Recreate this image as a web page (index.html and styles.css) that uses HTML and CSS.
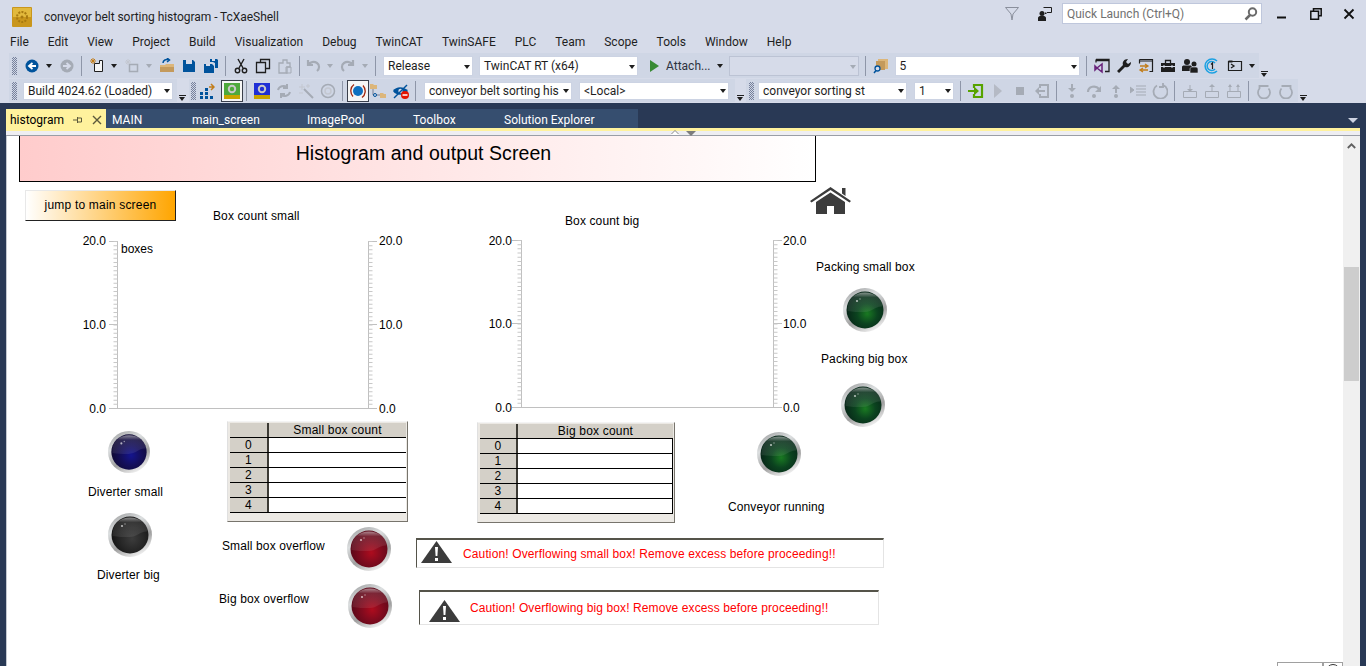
FILE: index.html
```html
<!DOCTYPE html>
<html lang="en">
<head>
  <meta charset="UTF-8">
  <title>conveyor belt sorting histogram - TcXaeShell</title>
  <link rel="stylesheet" href="styles.css">
</head>
<body>

  <!-- shared lamp drawings -->
  <svg class="sprites" width="0" height="0" aria-hidden="true">
    <defs>
      <linearGradient id="ring" x1="0.1" y1="0" x2="0.6" y2="1">
        <stop offset="0" stop-color="#9a9b9c"/>
        <stop offset="0.35" stop-color="#dcdfe0"/>
        <stop offset="0.7" stop-color="#a0a0a0"/>
        <stop offset="1" stop-color="#ececec"/>
      </linearGradient>
      <linearGradient id="shine" x1="0" y1="0" x2="0" y2="1">
        <stop offset="0" stop-color="#fff" stop-opacity=".5"/>
        <stop offset="0.25" stop-color="#fff" stop-opacity=".12"/>
        <stop offset="1" stop-color="#fff" stop-opacity=".08"/>
      </linearGradient>
      <radialGradient id="face-green" cx="0.56" cy="0.6" r="0.55">
        <stop offset="0" stop-color="#1a7a22"/>
        <stop offset="0.5" stop-color="#0b431f"/>
        <stop offset="1" stop-color="#072618"/>
      </radialGradient>
      <radialGradient id="face-blue" cx="0.56" cy="0.6" r="0.55">
        <stop offset="0" stop-color="#14148e"/>
        <stop offset="0.5" stop-color="#140f5c"/>
        <stop offset="1" stop-color="#100a35"/>
      </radialGradient>
      <radialGradient id="face-black" cx="0.56" cy="0.6" r="0.55">
        <stop offset="0" stop-color="#3c3c3c"/>
        <stop offset="0.6" stop-color="#262626"/>
        <stop offset="1" stop-color="#141414"/>
      </radialGradient>
      <radialGradient id="face-red" cx="0.56" cy="0.6" r="0.55">
        <stop offset="0" stop-color="#ae0c1e"/>
        <stop offset="0.5" stop-color="#820b1e"/>
        <stop offset="1" stop-color="#5c0819"/>
      </radialGradient>
      <g id="lamp-shine">
        <path d="M4.500 23C4 11 12 4.500 22 4.500s18 6.500 17.500 14c-7-1-10 5.500-18 5.500-7 0-11 0-17-1z" fill="url(#shine)"/>
        <circle cx="14" cy="13" r="1.100" fill="#fff" opacity=".65"/>
        <circle cx="17" cy="11" r=".7" fill="#fff" opacity=".55"/>
      </g>
      <symbol id="lamp-green" viewBox="0 0 44 44">
        <circle cx="22" cy="22" r="22" fill="url(#ring)"/>
        <circle cx="22" cy="22" r="18.500" fill="url(#face-green)"/>
        <use href="#lamp-shine"/>
      </symbol>
      <symbol id="lamp-blue" viewBox="0 0 44 44">
        <circle cx="22" cy="22" r="22" fill="url(#ring)"/>
        <circle cx="22" cy="22" r="18.500" fill="url(#face-blue)"/>
        <use href="#lamp-shine"/>
      </symbol>
      <symbol id="lamp-black" viewBox="0 0 44 44">
        <circle cx="22" cy="22" r="22" fill="url(#ring)"/>
        <circle cx="22" cy="22" r="18.500" fill="url(#face-black)"/>
        <use href="#lamp-shine"/>
      </symbol>
      <symbol id="lamp-red" viewBox="0 0 44 44">
        <circle cx="22" cy="22" r="22" fill="url(#ring)"/>
        <circle cx="22" cy="22" r="18.500" fill="url(#face-red)"/>
        <use href="#lamp-shine"/>
      </symbol>
      <symbol id="warn" viewBox="0 0 31 22">
        <path d="M15.500 0 31 22H0z" fill="#3c3c3c"/>
        <path d="M14 6h3l-.6 9h-1.800zM14 17h3v3h-3z" fill="#fff"/>
      </symbol>
    </defs>
  </svg>

  <!-- title bar -->
  <div class="title-bar">
    <svg class="app-logo" viewBox="0 0 20 20">
      <rect width="20" height="20" rx="1" fill="#c9961c"/>
      <rect x="1" y="1" width="18" height="9" fill="#e2b93c"/>
      <circle cx="10" cy="10" r="5" fill="none" stroke="#a87a10" stroke-width="2" stroke-dasharray="2 1.200"/>
      <circle cx="10" cy="10" r="1.500" fill="#a87a10"/>
    </svg>
    <span class="app-title">conveyor belt sorting histogram - TcXaeShell</span>
    <svg class="title-icon filter-icon" viewBox="0 0 14 14">
      <path d="M.5 .5h13L8 7l-1 6L6 7z" fill="none" stroke="#8a8f9c"/>
    </svg>
    <svg class="title-icon feedback-icon" viewBox="0 0 14 14">
      <circle cx="4" cy="6.500" r="2.500" fill="#1e1e1e"/>
      <path d="M0 14v-3c0-1 1-2 2-2h4c1 0 2 1 2 2v3z" fill="#1e1e1e"/>
      <path d="M5.500 .5h8v5H9L7.500 7V5.500" fill="none" stroke="#1e1e1e"/>
    </svg>
    <div class="quick-launch">
      <span>Quick Launch (Ctrl+Q)</span>
      <svg viewBox="0 0 14 14" width="14" height="14">
        <circle cx="8.500" cy="5" r="3.700" fill="none" stroke="#6a6a6a" stroke-width="2"/>
        <path d="M6 8 1.500 12.500" stroke="#6a6a6a" stroke-width="2.500"/>
      </svg>
    </div>
    <div class="win-buttons">
      <svg viewBox="0 0 12 12" width="12" height="12"><path d="M1 9.500h9" stroke="#111" stroke-width="2"/></svg>
      <svg viewBox="0 0 12 12" width="12" height="12"><path d="M3.500 2.500V.8h7.700v6.900H9M.8 3.300h7.700v7.900H.8z" fill="none" stroke="#111" stroke-width="1.500"/></svg>
      <svg viewBox="0 0 12 12" width="12" height="12"><path d="m1.500 1.500 9 9m0-9-9 9" stroke="#111" stroke-width="1.800"/></svg>
    </div>
  </div>

  <!-- menu -->
  <nav class="menu-bar">
    <span>File</span><span>Edit</span><span>View</span><span>Project</span><span>Build</span>
    <span>Visualization</span><span>Debug</span><span>TwinCAT</span><span>TwinSAFE</span><span>PLC</span>
    <span>Team</span><span>Scope</span><span>Tools</span><span>Window</span><span>Help</span>
  </nav>

  <!-- toolbar row 1 -->
  <div class="toolbar-row row-one">
    <div class="strip strip-a">
      <i class="grip"></i>
      <span class="tool"><svg viewBox="0 0 16 16"><circle cx="8" cy="8" r="6.500" fill="#00539c"/><path d="M12 8H6m2.500-3L5 8l3.500 3" fill="none" stroke="#fff" stroke-width="1.800"/></svg></span>
      <i class="drop"></i>
      <span class="tool"><svg viewBox="0 0 16 16"><circle cx="8" cy="8" r="6.500" fill="#a5abb5"/><path d="M4 8h6M7.500 5 11 8l-3.500 3" fill="none" stroke="#d6dbe9" stroke-width="1.800"/></svg></span>
      <i class="sep"></i>
      <span class="tool"><svg viewBox="0 0 16 16"><path d="M5.500 5.500h5v-3h3v11h-8z" fill="#f5f5f5" stroke="#1e1e1e"/><path d="M4 0v6M1 3h6M2 1l4 4m0-4L2 5" stroke="#c27d1a"/></svg></span>
      <i class="drop"></i>
      <span class="tool"><svg viewBox="0 0 16 16"><path d="M5.500 6.500h8v7h-8z" fill="none" stroke="#a5abb5" stroke-width="1.500"/><path d="M4 1v6M1 4h6M2 2l4 4m0-4L2 6" stroke="#c3c7d0"/></svg></span>
      <i class="drop drop-off"></i>
      <span class="tool"><svg viewBox="0 0 16 16"><path d="M1 7h5l1-1h8v8H1z" fill="#dcb67a"/><path d="M1 14h14v-5H1z" fill="#c49a5c"/><path d="M4 5c0-3 3-4 6-3M8 0l2.500 2L8 4" fill="none" stroke="#00539c" stroke-width="1.500"/></svg></span>
      <span class="tool"><svg viewBox="0 0 16 16"><path d="M2 2h10l2 2v10H2z" fill="#00539c"/><path d="M5 2h6v4H5z" fill="#d6dbe9"/></svg></span>
      <span class="tool"><svg viewBox="0 0 16 16"><path d="M1 6h8l2 2v7H1z" fill="#00539c"/><path d="M3 6h4v2H3z" fill="#d6dbe9"/><path d="M7 1h7l1 1v8h-3V5L10 4H7z" fill="#00539c"/><path d="M9 1h3v2H9z" fill="#d6dbe9"/></svg></span>
      <i class="sep"></i>
      <span class="tool"><svg viewBox="0 0 16 16"><path d="M5 1l5 9m1-9-5 9" stroke="#1e1e1e" stroke-width="1.400"/><circle cx="4.500" cy="12.500" r="2.200" fill="none" stroke="#1e1e1e" stroke-width="1.400"/><circle cx="11.500" cy="12.500" r="2.200" fill="none" stroke="#1e1e1e" stroke-width="1.400"/></svg></span>
      <span class="tool"><svg viewBox="0 0 16 16"><path d="M5.500 4V1.500h9v9H11M1.500 4.500h9v10h-9z" fill="none" stroke="#1e1e1e" stroke-width="1.300"/></svg></span>
      <span class="tool"><svg viewBox="0 0 16 16"><path d="M2 5h4V2h4v3h3v4h-3v6H2z" fill="none" stroke="#a5abb5" stroke-width="1.300"/><path d="M9 9h5v6H9z" fill="none" stroke="#a5abb5"/></svg></span>
      <i class="sep"></i>
      <span class="tool tool-tight"><svg viewBox="0 0 16 16"><path d="M3 2v5h5M3.500 6.500C5 4 9 3 12 5s2.500 6 0 8" fill="none" stroke="#a5abb5" stroke-width="2.200"/></svg></span>
      <i class="drop drop-off"></i>
      <span class="tool"><svg viewBox="0 0 16 16"><path d="M13 2v5H8m4.500-.5C11 4 7 3 4 5s-2.500 6 0 8" fill="none" stroke="#a5abb5" stroke-width="2.200"/></svg></span>
      <i class="drop drop-off"></i>
      <i class="sep"></i>
      <div class="combo combo-release">Release</div>
      <div class="combo combo-platform">TwinCAT RT (x64)</div>
      <svg class="play-icon" viewBox="0 0 9 12"><path d="M0 0l9 6-9 6z" fill="#388a34"/></svg>
      <span class="attach-text">Attach...</span>
      <i class="drop drop-attach"></i>
      <div class="combo combo-off"></div>
      <i class="sep sep-find"></i>
      <span class="tool"><svg viewBox="0 0 16 16"><path d="M5 1h10v10H5z" fill="#dcb67a"/><path d="M3 3h9v9H3z" fill="#c49a5c"/><circle cx="4.500" cy="10.500" r="2.500" fill="#d6dbe9" stroke="#00539c" stroke-width="1.300"/><path d="M3 12.500 1 15" stroke="#00539c" stroke-width="1.500"/></svg></span>
      <div class="combo combo-find">5</div>
      <i class="sep"></i>
      <span class="tool"><svg viewBox="0 0 16 16"><path d="M2 1.500h13v12h-4M2 1.500v3M2 2.500h13" fill="none" stroke="#1e1e1e" stroke-width="1.300"/><path d="M1 8l2 2-2 2zM3 10l5-4v8z" fill="none" stroke="#68217a" stroke-width="1.500"/></svg></span>
      <span class="tool"><svg viewBox="0 0 16 16"><path d="M1 13l6-6c-1-3 1-6 5-6l-2 3 2 2 3-2c0 4-3 6-6 5l-6 6z" fill="#1e1e1e"/></svg></span>
      <span class="tool"><svg viewBox="0 0 16 16"><path d="M1.500 1.500h13v12h-3M1.500 1.500v4M1.500 3h13" fill="none" stroke="#1e1e1e" stroke-width="1.200"/><path d="M2 8h8M7 6l3 2-3 2M10 12H3M5 10l-3 2 3 2" fill="none" stroke="#c27d1a" stroke-width="1.300"/></svg></span>
      <span class="tool"><svg viewBox="0 0 16 16"><path d="M1 5h14v9H1z" fill="#1e1e1e"/><path d="M5.500 5V2.500h5V5" fill="none" stroke="#1e1e1e" stroke-width="1.300"/><path d="M1 8.500h14" stroke="#d6dbe9"/><path d="M3 7.500h2v2H3zm8 0h2v2h-2z" fill="#d6dbe9"/></svg></span>
      <span class="tool"><svg viewBox="0 0 16 16"><circle cx="5" cy="4" r="3" fill="#1e1e1e"/><path d="M0 13V9c0-1 1-1.500 2-1.500h6c1 0 2 .5 2 1.500v4z" fill="#1e1e1e"/><circle cx="12" cy="6" r="2.500" fill="#1e1e1e"/><path d="M8 15v-4c0-1 1-2 2-2h4c1 0 2 1 2 2v4z" fill="#1e1e1e" stroke="#d6dbe9" stroke-width=".6"/></svg></span>
      <span class="tool"><svg viewBox="0 0 16 16"><path d="M13 3a7 7 0 1 0 0 10M11 5a4.500 4.500 0 1 0 0 6" fill="none" stroke="#1ba1e2" stroke-width="1.500"/><path d="M7 6.500 8.500 5v6" fill="none" stroke="#1e1e1e" stroke-width="1.200"/></svg></span>
      <span class="tool tool-shift"><svg viewBox="0 0 16 16"><path d="M1.500 3.500h13v9h-13z" fill="none" stroke="#1e1e1e" stroke-width="1.200"/><path d="M1.500 3.500h4" stroke="#1e1e1e" stroke-width="2"/><path d="M4 6l3 2-3 2" fill="none" stroke="#1e1e1e" stroke-width="1.300"/></svg></span>
      <i class="drop"></i>
    </div>
    <i class="overflow"></i>
  </div>

  <!-- toolbar row 2 -->
  <div class="toolbar-row row-two">
    <div class="strip strip-b">
      <i class="grip"></i>
      <div class="combo combo-build">Build 4024.62 (Loaded)</div>
    </div>
    <i class="overflow overflow-b"></i>
    <div class="strip strip-c">
      <i class="grip"></i>
      <span class="tool"><svg viewBox="0 0 16 16"><path d="M1 9h3v3H1zm5 0h3v3H6zm-5 4h3v3H1zm5 0h3v3H6zm5 0h3v3h-3zM6 5h3v3H6z" fill="#00539c"/><path d="M10 4h4m-2-3 3 3-3 3" fill="none" stroke="#c27d1a" stroke-width="1.500"/></svg></span>
      <span class="tool tool-on tool-first"><svg viewBox="0 0 16 16"><path d="M0 0h16v12H0z" fill="#4ea93c"/><path d="M0 12h16v4H0z" fill="#c9a400"/><circle cx="8" cy="6" r="3.200" fill="none" stroke="#c8c8c8" stroke-width="2"/></svg></span>
      <i class="sep"></i>
      <span class="tool"><svg viewBox="0 0 16 16"><path d="M0 0h16v12H0z" fill="#1f2fd6"/><path d="M0 12h16v4H0z" fill="#c9a400"/><circle cx="8" cy="6" r="3.200" fill="none" stroke="#c8c8c8" stroke-width="2"/></svg></span>
      <span class="tool"><svg viewBox="0 0 16 16"><path d="M2 7c1-4 6-5 9-3M14 9c-1 4-6 5-9 3M11 1v4H7M5 15v-4h4" fill="none" stroke="#a5abb5" stroke-width="2"/></svg></span>
      <span class="tool"><svg viewBox="0 0 16 16"><path d="M6 6l9 9" stroke="#a5abb5" stroke-width="2"/><path d="M4 1v6M1 4h6M10 1v4M8 3h4M1 10h4" stroke="#c3c7d0"/></svg></span>
      <span class="tool"><svg viewBox="0 0 16 16"><circle cx="8" cy="8" r="6.500" fill="none" stroke="#a5abb5" stroke-width="1.500"/><circle cx="8" cy="8" r="3" fill="none" stroke="#c3c7d0" stroke-width="1.500"/></svg></span>
      <i class="sep"></i>
      <span class="tool tool-on"><svg viewBox="0 0 16 16"><circle cx="8" cy="8" r="5" fill="#0e70c0"/><path d="M4 1.500C.5 4-.5 9.500 3 13.500m9 1c3.500-2.500 4.500-8 1-12" fill="none" stroke="#a1260d" stroke-width="1.300"/></svg></span>
      <span class="tool tool-narrow"><svg viewBox="0 0 16 16"><path d="M0 1h3l1 1h3v4H0zM10 10h3l1 1h2v4h-6z" fill="#dcb67a"/><path d="M3 6v6h7" fill="none" stroke="#7a8296"/><circle cx="5" cy="12" r="1.500" fill="#d6dbe9" stroke="#00539c"/></svg></span>
      <span class="tool tool-eye"><svg viewBox="0 0 16 16"><path d="M0 8c3-5 11-5 15 0-4 5-12 5-15 0z" fill="#00539c"/><circle cx="7.500" cy="8" r="2.200" fill="#d6dbe9"/><path d="M1 15 14 2" stroke="#00539c" stroke-width="1.500"/><circle cx="12" cy="12" r="4" fill="#e51400"/><path d="M9.500 12h5" stroke="#fff" stroke-width="1.500"/></svg></span>
      <i class="sep"></i>
      <div class="combo combo-file">conveyor belt sorting his</div>
      <div class="combo combo-local">&lt;Local&gt;</div>
    </div>
    <i class="overflow"></i>
    <div class="strip strip-d">
      <i class="grip"></i>
      <div class="combo combo-st">conveyor sorting st</div>
      <div class="combo combo-one">1</div>
      <i class="sep"></i>
      <span class="tool"><svg viewBox="0 0 16 16"><path d="M6 5V2h8v12H6v-3" fill="none" stroke="#57a300" stroke-width="2.200"/><path d="M0 7h6V3.500L11 8l-5 4.500V9H0z" fill="#57a300"/></svg></span>
      <span class="tool"><svg viewBox="0 0 16 16"><path d="M4 1l8 7-8 7z" fill="#b5bac5"/></svg></span>
      <span class="tool"><svg viewBox="0 0 16 16"><path d="M4 4h8v8H4z" fill="#a5abb5"/></svg></span>
      <span class="tool"><svg viewBox="0 0 16 16"><path d="M6 5V2h8v12H6v-3" fill="none" stroke="#a5abb5" stroke-width="2"/><path d="M11 7v2H5v3L1 8l4-4v3z" fill="#a5abb5"/></svg></span>
      <i class="sep"></i>
      <span class="tool"><svg viewBox="0 0 16 16"><path d="M7 1h2v4h3l-4 4-4-4h3z" fill="#a5abb5"/><circle cx="8" cy="13" r="2" fill="#a5abb5"/></svg></span>
      <span class="tool"><svg viewBox="0 0 16 16"><path d="M2 9c0-6 8-7 11-3" fill="none" stroke="#a5abb5" stroke-width="2.200"/><path d="M15 3v6H9z" fill="#a5abb5"/><circle cx="8" cy="13" r="2" fill="#a5abb5"/></svg></span>
      <span class="tool"><svg viewBox="0 0 16 16"><path d="M7 10h2V6h3L8 2 4 6h3z" fill="#a5abb5"/><circle cx="8" cy="13" r="2" fill="#a5abb5"/></svg></span>
      <span class="tool"><svg viewBox="0 0 16 16"><path d="M0 4l4 3-4 3zM6 3h10M6 6h10M6 9h10M6 12h10" fill="#a5abb5" stroke="#a5abb5"/></svg></span>
      <span class="tool"><svg viewBox="0 0 16 16"><path d="M5 2.500a7 7 0 1 0 6-.5M11 0v4H7" fill="none" stroke="#a5abb5" stroke-width="1.800"/></svg></span>
      <i class="sep"></i>
      <span class="tool"><svg viewBox="0 0 16 16"><path d="M1.500 8.500h13v6h-13zM8 2v7" fill="none" stroke="#a5abb5"/><path d="M5 6l3 3 3-3z" fill="#a5abb5"/></svg></span>
      <span class="tool"><svg viewBox="0 0 16 16"><path d="M1.500 8.500h13v6h-13zM8 3v6" fill="none" stroke="#a5abb5"/><path d="M5 4l3-3 3 3z" fill="#a5abb5"/></svg></span>
      <span class="tool"><svg viewBox="0 0 16 16"><path d="M1.500 8.500h13v6h-13zM4 2v6m8-6v6" fill="none" stroke="#a5abb5"/><path d="M2 4l2-3 2 3zm8 0 2-3 2 3z" fill="#a5abb5"/></svg></span>
      <i class="sep"></i>
      <span class="tool"><svg viewBox="0 0 16 16"><path d="M12.500 5.500a6 6 0 1 1-9 0V2M3.500 3h9" fill="none" stroke="#a5abb5" stroke-width="1.800"/></svg></span>
      <span class="tool"><svg viewBox="0 0 16 16"><path d="M3.500 5.500a6 6 0 1 0 9 0V2M12.500 3h-9" fill="none" stroke="#a5abb5" stroke-width="1.800"/></svg></span>
    </div>
    <i class="overflow overflow-b"></i>
  </div>

  <!-- document tabs -->
  <div class="tab-well">
    <div class="tab-active">
      <span>histogram</span>
      <svg viewBox="0 0 10 10" width="10" height="10"><path d="M4.500 2v6M4.500 3h4v4h-4M0 5h4.500" fill="none" stroke="#5c5a3c"/></svg>
      <svg viewBox="0 0 10 10" width="10" height="10"><path d="m1 1 8 8m0-8-8 8" stroke="#5c5a3c" stroke-width="1.400"/></svg>
    </div>
    <div class="tab-strip">
      <span class="tab-main">MAIN</span>
      <span class="tab-screen">main_screen</span>
      <span class="tab-pool">ImagePool</span>
      <span class="tab-box">Toolbox</span>
      <span>Solution Explorer</span>
    </div>
    <i class="tab-menu"></i>
  </div>

  <div class="doc-frame">
    <div class="doc-head">
      <i class="split-up"></i>
      <i class="split-down"></i>
    </div>
    <div class="doc-body">
      <!-- HMI canvas: items sit at their drawn place -->
      <main class="canvas">
        <h1 class="banner">Histogram and output Screen</h1>
        <div class="jump-btn">jump to main screen</div>

        <svg class="home-icon" viewBox="0 0 41 28">
          <path d="M0 15 20.500 1 41 15l-1.500 1.500L20.500 4 1.500 16.500zM32 2h3.500v8L32 7.500z" fill="#3c3c3c"/>
          <path d="M6 16 20.500 6.500 35 16v12H24v-8h-7v8H6z" fill="#3c3c3c"/>
        </svg>

        <span class="lbl lbl-count-small">Box count small</span>
        <span class="lbl lbl-count-big">Box count big</span>

        <svg class="chart chart-small" viewBox="77 230 330 190">
          <path class="axis" d="M117.500 241v168M109 241.500h9M109 324.500h9M109 408.500h260M368.500 241v168M368 241.500h9M368 324.500h9M368 408.500h9"/>
          <path class="minor" d="M115.500 241v167M370.500 241v167"/>
          <text x="106" y="245" text-anchor="end">20.0</text>
          <text x="106" y="329" text-anchor="end">10.0</text>
          <text x="106" y="413" text-anchor="end">0.0</text>
          <text x="379" y="245">20.0</text>
          <text x="379" y="329">10.0</text>
          <text x="379" y="413">0.0</text>
          <text x="121" y="253">boxes</text>
        </svg>

        <svg class="chart chart-big" viewBox="477 230 340 190">
          <path class="axis" d="M521.500 240v168M512 240.500h10M512 323.500h10M512 407.500h261M773.500 240v168M773 240.500h9M773 323.500h9M773 407.500h9"/>
          <path class="minor" d="M519.500 240v167M775.500 240v167"/>
          <text x="512" y="245" text-anchor="end">20.0</text>
          <text x="512" y="328" text-anchor="end">10.0</text>
          <text x="512" y="412" text-anchor="end">0.0</text>
          <text x="783" y="245">20.0</text>
          <text x="783" y="328">10.0</text>
          <text x="783" y="412">0.0</text>
        </svg>

        <div class="grid-table table-small">
          <div class="grid-head"><span></span><span>Small box count</span></div>
          <div class="grid-row"><span>0</span><span></span></div>
          <div class="grid-row"><span>1</span><span></span></div>
          <div class="grid-row"><span>2</span><span></span></div>
          <div class="grid-row"><span>3</span><span></span></div>
          <div class="grid-row"><span>4</span><span></span></div>
        </div>

        <div class="grid-table table-big">
          <div class="grid-head"><span></span><span>Big box count</span></div>
          <div class="grid-row"><span>0</span><span></span></div>
          <div class="grid-row"><span>1</span><span></span></div>
          <div class="grid-row"><span>2</span><span></span></div>
          <div class="grid-row"><span>3</span><span></span></div>
          <div class="grid-row"><span>4</span><span></span></div>
        </div>

        <svg class="lamp lamp-diverter-small"><use href="#lamp-blue"/></svg>
        <span class="lbl lbl-diverter-small">Diverter small</span>
        <svg class="lamp lamp-diverter-big"><use href="#lamp-black"/></svg>
        <span class="lbl lbl-diverter-big">Diverter big</span>

        <span class="lbl lbl-over-small">Small box overflow</span>
        <svg class="lamp lamp-over-small"><use href="#lamp-red"/></svg>
        <span class="lbl lbl-over-big">Big box overflow</span>
        <svg class="lamp lamp-over-big"><use href="#lamp-red"/></svg>

        <svg class="lamp lamp-conveyor"><use href="#lamp-green"/></svg>
        <span class="lbl lbl-conveyor">Conveyor running</span>

        <span class="lbl lbl-pack-small">Packing small box</span>
        <svg class="lamp lamp-pack-small"><use href="#lamp-green"/></svg>
        <span class="lbl lbl-pack-big">Packing big box</span>
        <svg class="lamp lamp-pack-big"><use href="#lamp-green"/></svg>

        <div class="alert alert-small">
          <svg class="alert-icon"><use href="#warn"/></svg>
          <span>Caution! Overflowing small box! Remove excess before proceeding!!</span>
        </div>
        <div class="alert alert-big">
          <svg class="alert-icon"><use href="#warn"/></svg>
          <span>Caution! Overflowing big box! Remove excess before proceeding!!</span>
        </div>

        <div class="corner-box"></div>
        <div class="corner-btn"></div>
      </main>
      <div class="scrollbar">
        <svg viewBox="0 0 9 6" width="9" height="6"><path d="M.8 5 4.500 1.300 8.200 5" fill="none" stroke="#606060" stroke-width="1.800"/></svg>
        <div class="scroll-thumb"></div>
      </div>
    </div>
  </div>

</body>
</html>
```

FILE: styles.css
```css
body {
  margin: 0;
  height: 666px;
  overflow: hidden;
  display: flex;
  flex-direction: column;
  background-color: #d6dbe9;
  color: #1e1e1e;
  font-family: Roboto, "Liberation Sans", sans-serif;
  font-size: 12px;
}

.sprites {
  position: absolute;
}

/* title bar */
.title-bar {
  height: 30px;
  display: flex;
  align-items: flex-start;
  flex-shrink: 0;
}

.app-logo {
  width: 20px;
  height: 20px;
  margin: 7px 0 0 12px;
}

.app-title {
  margin: 10px 0 0 12px;
  font-size: 12px;
  letter-spacing: -0.05px;
}

.title-icon {
  width: 14px;
  height: 14px;
  margin-top: 7px;
}

.filter-icon {
  margin-left: auto;
}

.feedback-icon {
  margin-left: 19px;
}

.quick-launch {
  width: 191px;
  height: 19px;
  margin: 3px 0 0 10px;
  padding: 0 3px 0 4px;
  display: flex;
  align-items: center;
  justify-content: space-between;
  box-sizing: content-box;
  background-color: #fff;
  border: 1px solid #bfc7dc;
  color: #717171;
}

.quick-launch span {
  width: 170px;
}

.win-buttons {
  width: 104px;
  margin-top: 8px;
  padding: 0 11px 0 14px;
  box-sizing: border-box;
  display: flex;
  justify-content: space-between;
}

/* menu */
.menu-bar {
  height: 23px;
  display: flex;
  align-items: center;
  padding-left: 10px;
  gap: 19px;
  flex-shrink: 0;
}

/* toolbars */
.toolbar-row {
  display: flex;
  align-items: stretch;
  flex-shrink: 0;
}

.row-one {
  height: 25px;
  padding-left: 9px;
}

.row-two {
  height: 23px;
  margin-top: 1px;
  padding-left: 9px;
}

.strip {
  display: flex;
  align-items: center;
  background-color: #cfd6e5;
}

.strip-a {
  width: 1250px;
}

.strip-b {
  width: 168px;
}

.strip-c {
  width: 546px;
}

.strip-d {
  width: 552px;
}

.grip {
  width: 5px;
  height: 18px;
  margin: 0 4px 0 3px;
  flex-shrink: 0;
  background-image: repeating-conic-gradient(#76809b 0 25%, transparent 0 50%);
  background-size: 2px 2px;
}

.strip-b .grip {
  margin-right: 6px;
}

.strip-c .grip {
  margin: 0 0 0 2px;
}

.tool {
  width: 22px;
  height: 22px;
  flex-shrink: 0;
  display: flex;
  align-items: center;
  justify-content: center;
  box-sizing: border-box;
}

.tool svg {
  width: 16px;
  height: 16px;
}

.tool-on {
  background-color: #f6f6f6;
  border: 1px solid #3a3f4c;
}

.tool-first {
  margin-left: 3px;
}

.tool-narrow {
  width: 18px;
}

.tool-eye {
  margin-left: 3px;
}

.tool-tight {
  margin-left: -2px;
}

.tool-shift {
  margin-left: 1px;
}

.drop {
  width: 13px;
  height: 22px;
  flex-shrink: 0;
  position: relative;
}

.drop::after {
  content: "";
  position: absolute;
  left: 3px;
  top: 9px;
  border: 3px solid transparent;
  border-top: 4px solid #1e1e1e;
  border-bottom: 0;
}

.drop-off::after {
  border-top-color: #a5abb5;
}

.drop-attach {
  margin-left: 3px;
}

.sep {
  width: 1px;
  height: 20px;
  margin: 0 4px 0 3px;
  flex-shrink: 0;
  background-color: #8e96a8;
}

.sep-find {
  margin-left: 6px;
}

.combo {
  height: 18px;
  padding-left: 4px;
  box-sizing: content-box;
  flex-shrink: 0;
  display: flex;
  align-items: center;
  background-color: #fff;
  border: 1px solid #ccd3e3;
  position: relative;
}

.combo::after {
  content: "";
  position: absolute;
  right: 2px;
  top: 8px;
  border: 3.500px solid transparent;
  border-top: 4px solid #1e1e1e;
  border-bottom: 0;
}

.row-two .combo {
  height: 16px;
}

.row-two .combo::after {
  top: 6px;
}

.combo-release {
  width: 84px;
  margin-left: 3px;
}

.combo-platform {
  width: 153px;
  margin-left: 6px;
}

.combo-off {
  width: 124px;
  margin-left: 2px;
  background-color: #d6dbe9;
  border-color: #bcc3d4;
}

.combo-off::after {
  border-top-color: #a5abb5;
}

.combo-find {
  width: 179px;
  margin: 0 3px 0 3px;
}

.combo-build {
  width: 144px;
}

.combo-file {
  width: 142px;
  margin-left: 4px;
  white-space: nowrap;
  letter-spacing: -0.03px;
}

.combo-local {
  width: 144px;
  margin-left: 7px;
}

.combo-st {
  width: 143px;
}

.combo-one {
  width: 34px;
  margin: 0 3px 0 7px;
}

.play-icon {
  width: 9px;
  height: 12px;
  margin-left: 12px;
  flex-shrink: 0;
}

.attach-text {
  margin-left: 7px;
  color: #2d3340;
  flex-shrink: 0;
}

.overflow {
  width: 11px;
  position: relative;
  flex-shrink: 0;
}

.overflow-b {
  width: 12px;
}

.overflow::before {
  content: "";
  position: absolute;
  left: 2px;
  bottom: 6px;
  width: 7px;
  height: 1px;
  background-color: #1e1e1e;
}

.overflow::after {
  content: "";
  position: absolute;
  left: 2px;
  bottom: 1px;
  border: 3.500px solid transparent;
  border-top: 4px solid #1e1e1e;
  border-bottom: 0;
}

/* tabs */
.tab-well {
  height: 25px;
  margin-top: 1px;
  padding: 6px 0 0 6px;
  box-sizing: border-box;
  flex-shrink: 0;
  display: flex;
  align-items: stretch;
  background-color: #293955;
  position: relative;
}

.tab-active {
  width: 100px;
  padding: 2px 4px 0 4px;
  box-sizing: border-box;
  display: flex;
  align-items: center;
  background-color: #fff29d;
  color: #000;
}

.tab-active svg:nth-child(2) {
  margin-left: 9px;
}

.tab-active svg:nth-child(3) {
  margin-left: 9px;
}

.tab-strip {
  width: 532px;
  padding: 2px 0 0 6px;
  box-sizing: border-box;
  display: flex;
  align-items: center;
  background-color: #364e6f;
  color: #fff;
}

.tab-main {
  width: 80px;
}

.tab-screen {
  width: 115px;
}

.tab-pool {
  width: 106px;
}

.tab-box {
  width: 91px;
}

.tab-menu {
  position: absolute;
  right: 8px;
  top: 15px;
  border: 5px solid transparent;
  border-top: 5px solid #ced4e2;
  border-bottom: 0;
}

/* document */
.doc-frame {
  flex: 1;
  min-height: 0;
  padding: 0 6px;
  display: flex;
  flex-direction: column;
  background-color: #293955;
}

.doc-head {
  height: 8px;
  flex-shrink: 0;
  box-sizing: border-box;
  border-top: 3px solid #fff29d;
  border-bottom: 1px solid #9a9ea6;
  background-color: #eeeef2;
  position: relative;
}

.split-up {
  position: absolute;
  left: 665px;
  top: 0;
  border: 4px solid transparent;
  border-bottom: 4px solid #fff;
  border-top: 0;
  filter: drop-shadow(0 -1px 0 #8a8a8a);
}

.split-down {
  position: absolute;
  left: 680px;
  top: 0;
  border: 5px solid transparent;
  border-top: 5px solid #7d7d7d;
  border-bottom: 0;
}

.doc-body {
  flex: 1;
  min-height: 0;
  display: flex;
}

.canvas {
  flex: 1;
  min-width: 0;
  position: relative;
  overflow: hidden;
  background-color: #fff;
  border-left: 1px solid #c4c8d0;
  font-family: "Liberation Sans", Arial, sans-serif;
  color: #000;
}

.scrollbar {
  width: 17px;
  flex-shrink: 0;
  padding-top: 7px;
  box-sizing: border-box;
  background-color: #f0f0f0;
  text-align: center;
  position: relative;
}

.scrollbar svg {
  display: block;
  margin: 0 auto;
}

.scroll-thumb {
  position: absolute;
  left: 1px;
  right: 1px;
  top: 131px;
  height: 114px;
  background-color: #cdcdcd;
}

/* HMI items */
.banner {
  position: absolute;
  left: 12px;
  top: -1px;
  width: 797px;
  height: 47px;
  margin: 0;
  padding: 7px 0 0 12px;
  box-sizing: border-box;
  border: 1px solid #000;
  border-top: 0;
  background: linear-gradient(to right, #ffcccc, #fff);
  font-size: 19.500px;
  font-weight: normal;
  text-align: center;
  letter-spacing: 0.07px;
}

.jump-btn {
  position: absolute;
  left: 18px;
  top: 54px;
  width: 151px;
  height: 31px;
  padding-bottom: 2px;
  box-sizing: border-box;
  display: flex;
  align-items: center;
  justify-content: center;
  border-top: 1px solid #e8e8e8;
  border-left: 1px solid #e8e8e8;
  border-right: 1px solid #222;
  border-bottom: 1px solid #222;
  background: linear-gradient(to right, #fff, #ffa500);
  letter-spacing: 0.2px;
}

.home-icon {
  position: absolute;
  left: 803px;
  top: 50px;
  width: 41px;
  height: 28px;
}

.lbl {
  position: absolute;
  white-space: nowrap;
  letter-spacing: 0.12px;
  line-height: 14px;
}

.lbl-count-small { left: 206px; top: 73px; }
.lbl-count-big { left: 558px; top: 78px; }
.lbl-diverter-small { left: 81px; top: 349px; }
.lbl-diverter-big { left: 90px; top: 432px; }
.lbl-over-small { left: 215px; top: 403px; }
.lbl-over-big { left: 212px; top: 456px; }
.lbl-conveyor { left: 721px; top: 364px; }
.lbl-pack-small { left: 809px; top: 124px; }
.lbl-pack-big { left: 814px; top: 216px; }

.chart {
  position: absolute;
  height: 190px;
  top: 94px;
}

.chart text {
  font-size: 12px;
  fill: #000;
}

.chart-small {
  left: 70px;
  width: 330px;
}

.chart-big {
  left: 470px;
  width: 340px;
}

.axis {
  fill: none;
  stroke: #c0c0c0;
}

.minor {
  fill: none;
  stroke: #c8c8c8;
  stroke-width: 4;
  stroke-dasharray: 1 3.175;
}

.grid-table {
  position: absolute;
  height: 101px;
  padding: 1px 1px 9px 2px;
  box-sizing: border-box;
  background-color: #ece9e4;
  border-top: 1px solid #f4f4f4;
  border-left: 1px solid #e0e0e0;
  border-right: 1px solid #77746c;
  border-bottom: 1px solid #77746c;
}

.table-small {
  left: 220px;
  top: 285px;
  width: 181px;
}

.table-big {
  left: 470px;
  top: 286px;
  width: 198px;
}

.grid-head,
.grid-row {
  display: grid;
  grid-template-columns: 39px 1fr;
  height: 15px;
  line-height: 14px;
  text-align: center;
  box-sizing: border-box;
  border-bottom: 1px solid #000;
}

.table-big .grid-head,
.table-big .grid-row {
  grid-template-columns: 38px 1fr;
}

.table-big .grid-row span:last-child {
  border-right: 1px solid #000;
}

.grid-head span,
.grid-row span:first-child {
  background-color: #d4d0c8;
  letter-spacing: 0.2px;
}

.grid-head span:first-child,
.grid-row span:first-child {
  border-right: 2px solid #3c3a34;
}

.grid-row span:last-child {
  background-color: #fff;
}

.lamp {
  position: absolute;
  width: 44px;
  height: 44px;
}

.lamp-diverter-small { left: 101px; top: 295px; width: 42px; height: 42px; }
.lamp-diverter-big { left: 101px; top: 377px; }
.lamp-over-small { left: 340px; top: 391px; }
.lamp-over-big { left: 341px; top: 448px; }
.lamp-conveyor { left: 750px; top: 296px; }
.lamp-pack-small { left: 836px; top: 152px; }
.lamp-pack-big { left: 834px; top: 247px; }

.alert {
  position: absolute;
  box-sizing: border-box;
  display: flex;
  color: #f00;
  letter-spacing: 0.1px;
  border-top: 2px solid #55544a;
  border-left: 1px solid #55544a;
  border-right: 1px solid #e4e4e4;
  border-bottom: 1px solid #e4e4e4;
}

.alert-icon {
  width: 31px;
  height: 22px;
  flex-shrink: 0;
}

.alert-small {
  left: 409px;
  top: 402px;
  width: 468px;
  height: 30px;
  padding: 1px 0 0 4px;
  align-items: flex-start;
}

.alert-small span {
  margin: 6px 0 0 11px;
  letter-spacing: 0.13px;
}

.alert-big {
  left: 412px;
  top: 454px;
  width: 460px;
  height: 35px;
  padding: 8px 0 0 9px;
  align-items: flex-start;
}

.alert-big span {
  margin: 1px 0 0 10px;
}

.corner-box {
  position: absolute;
  left: 1270px;
  top: 526px;
  width: 44px;
  height: 10px;
  border: 1px solid #a0a0a0;
}

.corner-btn {
  position: absolute;
  left: 1316px;
  top: 526px;
  width: 18px;
  height: 10px;
  border: 1px solid #a0a0a0;
  overflow: hidden;
}

.corner-btn::after {
  content: "";
  position: absolute;
  left: 2px;
  top: 1px;
  width: 12px;
  height: 12px;
  border: 1px solid #333;
  border-radius: 50%;
}
```
